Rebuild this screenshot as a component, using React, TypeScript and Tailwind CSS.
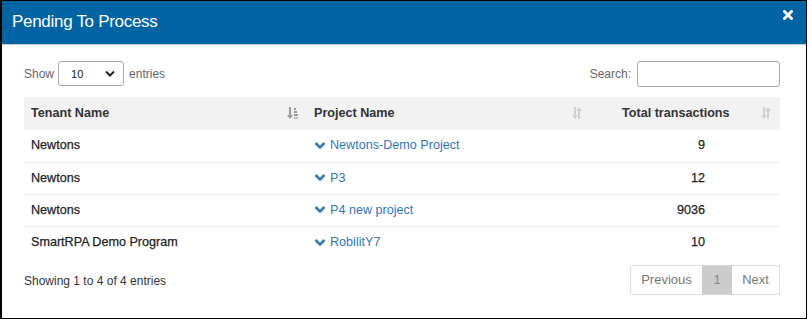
import React from "react";

const SortBoth = () => (
  <svg width="10" height="12" viewBox="0 0 10 12" className="text-[#d0d0d0]" fill="currentColor">
    <path d="M2 0h2v8h2L3 12 0 8h2z" />
    <path d="M7 0l3 4H8v8H6V4H4z" />
  </svg>
);

const SortActive = () => (
  <svg width="11" height="12" viewBox="0 0 11 12" className="text-[#999]" fill="currentColor">
    <path d="M2 0h2v8h2L3 12 0 8h2z" />
    <rect x="7" y="1" width="2" height="2" />
    <rect x="7" y="4" width="3" height="2" />
    <rect x="7" y="7" width="4" height="2" />
    <rect x="7" y="10" width="4" height="2" opacity="0.6" />
  </svg>
);

const Chevron = () => (
  <svg width="12" height="9" viewBox="0 0 12 9" className="text-[#337ab7]">
    <polyline points="1.5,2 6,6.5 10.5,2" fill="none" stroke="currentColor" strokeWidth="2.6" />
  </svg>
);

const rows = [
  { tenant: "Newtons", project: "Newtons-Demo Project", total: "9" },
  { tenant: "Newtons", project: "P3", total: "12" },
  { tenant: "Newtons", project: "P4 new project", total: "9036" },
  { tenant: "SmartRPA Demo Program", project: "RobilitY7", total: "10" },
];

export default function App() {
  return (
    <div className="w-[809px] h-[321px] bg-white" style={{ fontFamily: "'Liberation Sans', Arial, sans-serif" }}>
      <div className="w-[807px] h-[319px] border-t border-r border-b border-l-2 border-black flex flex-col">
        <div className="h-[44px] bg-[#0064a4] flex items-start justify-between pl-[10px] pr-[13px] border-b border-[#c8c8c8] shrink-0">
          <div className="text-white text-[17px] mt-[8px] tracking-[-0.3px]">Pending To Process</div>
          <svg width="10" height="10" viewBox="0 0 10 10" className="mt-[9px]">
            <path d="M1.5 1.5L8.5 8.5M8.5 1.5L1.5 8.5" stroke="white" strokeWidth="2.8" strokeLinecap="square" />
          </svg>
        </div>
        <div className="px-[22px] pt-[16px] flex flex-col">
          <div className="flex items-center justify-between h-[25px] w-[756px]">
            <div className="flex items-center text-[12px] text-[#666]">
              <span>Show</span>
              <div className="ml-[4px] w-[66px] h-[25px] border border-[#aaa] rounded-[3px] flex items-center justify-between pl-[12px] pr-[8px] text-[11px] text-[#222]">
                <span className="mt-[2px]">10</span>
                <svg width="10" height="7" viewBox="0 0 10 7">
                  <polyline points="1,1.5 5,5.5 9,1.5" fill="none" stroke="#222" strokeWidth="2" />
                </svg>
              </div>
              <span className="ml-[5px]">entries</span>
            </div>
            <div className="flex items-center text-[12px] text-[#666]">
              <span>Search:</span>
              <div className="ml-[6px] w-[143px] h-[26px] border border-[#aaa] rounded-[3px] bg-white" />
            </div>
          </div>
          <table className="mt-[11px] w-[756px] border-collapse text-[12.6px] text-[#1e1e1e]">
            <thead>
              <tr className="bg-[#f2f2f2] h-[33px] text-[#333]">
                <th className="text-left font-bold pl-[7px] w-[282px]">
                  <div className="flex items-center justify-between pr-[8px]">
                    <span>Tenant Name</span>
                    <SortActive />
                  </div>
                </th>
                <th className="text-left font-bold pl-[8px] w-[289px]">
                  <div className="flex items-center justify-between pr-[13px]">
                    <span>Project Name</span>
                    <SortBoth />
                  </div>
                </th>
                <th className="text-left font-bold pl-[27px]">
                  <div className="flex items-center justify-between pr-[9px]">
                    <span>Total transactions</span>
                    <SortBoth />
                  </div>
                </th>
              </tr>
            </thead>
            <tbody>
              {rows.map((r, i) => (
                <tr key={i} className={`h-[32px] ${i > 0 ? "border-t border-[#ececec]" : ""}`}>
                  <td className="pl-[7px] [-webkit-text-stroke:0.25px]">{r.tenant}</td>
                  <td className="pl-[8px]">
                    <span className="flex items-center gap-[4px] text-[#2f76b6]">
                      <Chevron />
                      {r.project}
                    </span>
                  </td>
                  <td className="text-right pr-[75px] [-webkit-text-stroke:0.25px]">{r.total}</td>
                </tr>
              ))}
            </tbody>
          </table>
          <div className="mt-[7px] flex items-center justify-between w-[756px]">
            <div className="text-[12px] text-[#333] pt-[1px]">Showing 1 to 4 of 4 entries</div>
            <div className="flex h-[30px] border border-[#dcdcdc] rounded-[3px] text-[13px] text-[#777] overflow-hidden">
              <div className="w-[71px] flex items-center justify-center">Previous</div>
              <div className="w-[30px] flex items-center justify-center bg-[#cccccc] text-[#888]">1</div>
              <div className="w-[47px] flex items-center justify-center">Next</div>
            </div>
          </div>
        </div>
      </div>
    </div>
  );
}
